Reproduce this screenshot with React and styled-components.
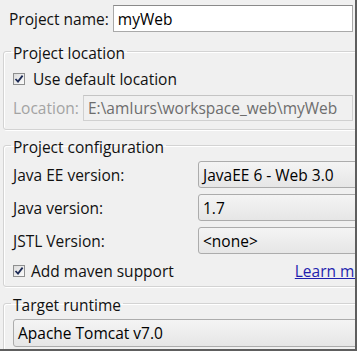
import React from "react";
import styled, { createGlobalStyle } from "styled-components";

const Global = createGlobalStyle`
  html, body { margin: 0; padding: 0; background: #ffffff; }
  body { font-family: "Open Sans", "Noto Sans", sans-serif; }
`;

const Frame = styled.div`
  width: 355px;
  height: 349px;
  background: #f0f0f0;
  border-right: 2px solid #5e5e5e;
  border-bottom: 2px solid #5e5e5e;
  overflow: hidden;
  font-size: 15.5px;
  color: #111;
  display: flex;
  flex-direction: column;
`;

const NameRow = styled.div`
  display: flex;
  align-items: center;
  margin-top: 5px;
  padding-left: 9px;
`;

const Label = styled.span`
  width: ${(p) => p.$w || "auto"};
  flex: none;
  white-space: nowrap;
  color: ${(p) => (p.$disabled ? "#a3a3a3" : "#111")};
`;

const TextInput = styled.div`
  box-sizing: border-box;
  height: ${(p) => p.$h || "27px"};
  width: ${(p) => p.$w};
  margin-left: ${(p) => p.$ml || "0"};
  padding-left: 4px;
  display: flex;
  align-items: center;
  background: ${(p) => (p.$disabled ? "#f0f0f0" : "#ffffff")};
  color: ${(p) => (p.$disabled ? "#6d6d6d" : "#000")};
  border: 1px solid ${(p) => (p.$disabled ? "#d0d0d0" : "#a9a9a9")};
  border-top-color: ${(p) => (p.$disabled ? "#c4c4c4" : "#8a8a8a")};
  white-space: nowrap;
  flex: none;
`;

const Group = styled.fieldset`
  margin: ${(p) => p.$mt} 0 0 3px;
  width: 420px;
  min-width: 0;
  box-sizing: border-box;
  border: 1px solid #d3d3d3;
  border-radius: 3px;
  box-shadow: inset 1px 1px 0 #ffffff, 1px 1px 0 #ffffff;
  padding: ${(p) => p.$pad};
  flex: none;
`;

const Legend = styled.legend`
  padding: 4px 2px 0;
  margin-left: -2px;
  line-height: 18px;
  color: #111;
`;

const CheckRow = styled.div`
  display: flex;
  align-items: center;
  height: 22px;
  gap: ${(p) => p.$gap};
  margin-top: ${(p) => p.$mt || "0"};
`;

const Box = styled.span`
  box-sizing: border-box;
  width: 12px;
  height: 12px;
  flex: none;
  border: 1px solid #8e8f8f;
  background: linear-gradient(135deg, #dcdcdc, #fbfbfb);
  display: flex;
  align-items: center;
  justify-content: center;
`;

const Row = styled.div`
  display: flex;
  align-items: center;
  margin-top: ${(p) => p.$mt || "0"};
`;

const Combo = styled.div`
  box-sizing: border-box;
  width: ${(p) => p.$w || "220px"};
  height: ${(p) => p.$h || "27px"};
  padding-left: 4px;
  display: flex;
  align-items: center;
  border: 1px solid #acacac;
  border-radius: 3px;
  background: linear-gradient(#f4f4f4, #e6e6e6);
  color: #000;
  white-space: nowrap;
  flex: none;
`;

const Link = styled.a`
  margin-left: 115px;
  color: #1f1fae;
  text-decoration: underline;
  white-space: nowrap;
`;

const Check = () => (
  <svg width="10" height="10" viewBox="0 0 10 10">
    <path d="M1.5 5 L4 7.6 L8.6 1.6" fill="none" stroke="#1c2a55" strokeWidth="1.8" />
  </svg>
);

export default function App() {
  return (
    <>
      <Global />
      <Frame>
        <NameRow>
          <Label>Project name:</Label>
          <TextInput $w="240px" $ml="4px">myWeb</TextInput>
        </NameRow>

        <Group $mt="8px" $pad="6px 0 8px 9px">
          <Legend>Project location</Legend>
          <CheckRow $gap="8px">
            <Box><Check /></Box>
            <span>Use default location</span>
          </CheckRow>
          <Row $mt="5px">
            <Label $w="70px" $disabled>Location:</Label>
            <TextInput $w="270px" $h="26px" $disabled>E:\amIurs\workspace_web\myWeb</TextInput>
          </Row>
        </Group>

        <Group $mt="4px" $pad="5px 0 4px 9px">
          <Legend>Project configuration</Legend>
          <Row>
            <Label $w="185px">Java EE version:</Label>
            <Combo>JavaEE 6 - Web 3.0</Combo>
          </Row>
          <Row $mt="6px">
            <Label $w="185px">Java version:</Label>
            <Combo>1.7</Combo>
          </Row>
          <Row $mt="6px">
            <Label $w="185px">JSTL Version:</Label>
            <Combo>&lt;none&gt;</Combo>
          </Row>
          <CheckRow $gap="6px" $mt="6px">
            <Box><Check /></Box>
            <span>Add maven support</span>
            <Link>Learn more</Link>
          </CheckRow>
        </Group>

        <Group $mt="5px" $pad="5px 0 10px 9px">
          <Legend>Target runtime</Legend>
          <Combo $w="400px" $h="28px">Apache Tomcat v7.0</Combo>
        </Group>
      </Frame>
    </>
  );
}
